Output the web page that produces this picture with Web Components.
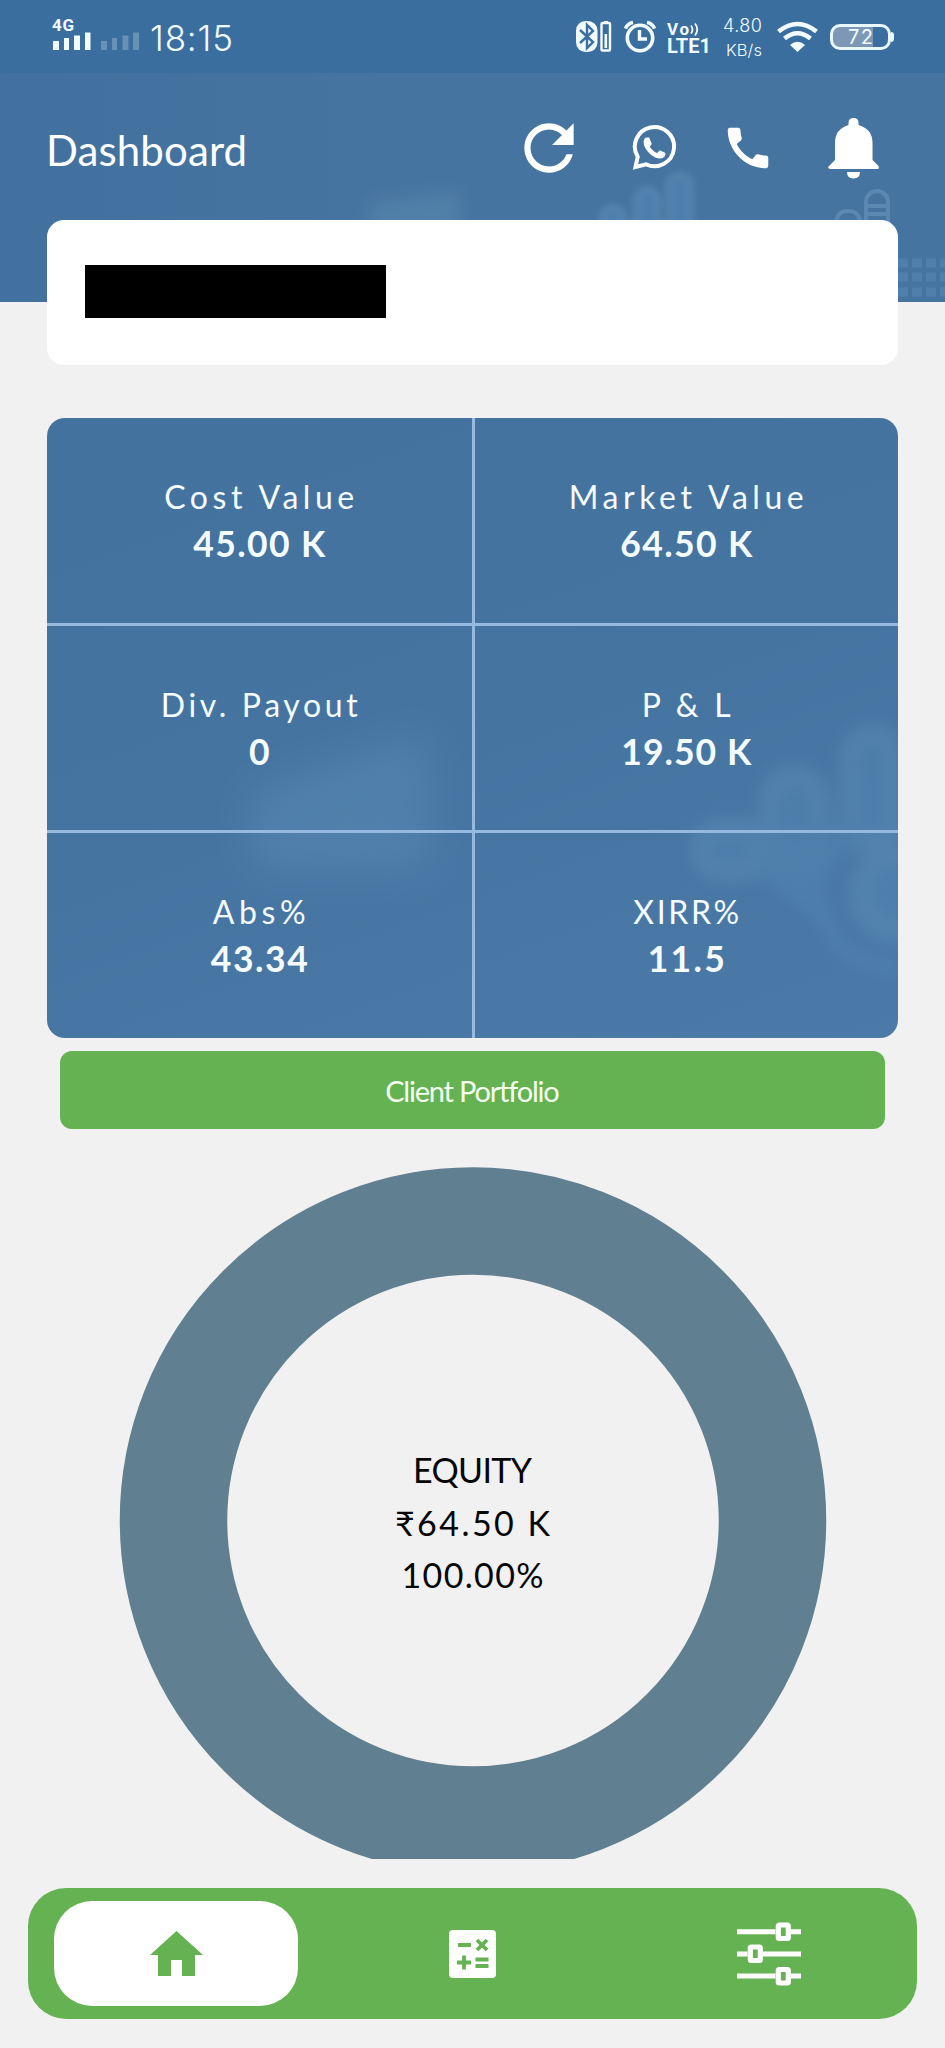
<!DOCTYPE html>
<html lang="en">
<head>
    <meta charset="UTF-8">
    <meta name="viewport" content="width=device-width, initial-scale=1.0">
    <title>Dashboard</title>
    <style>
        body {
            margin: 0;
            background: #f1f1f1;
            font-family: Lato, "Noto Sans", sans-serif;
        }
    </style>
</head>
<body>
    <dashboard-app></dashboard-app>

    <template id="tpl-app">
        <style>
            :host {
                display: flex;
                flex-direction: column;
                width: 945px;
                height: 2048px;
                overflow: hidden;
            }
            client-card { margin: -82px 47px 0; }
            stat-grid { margin: 53px 47px 0; }
            green-button { margin: 13px 60px 0; }
            donut-chart { margin-top: 38px; }
            bottom-nav { margin: 29px 28px 0; }
        </style>
        <status-bar></status-bar>
        <app-header>Dashboard</app-header>
        <client-card></client-card>
        <stat-grid>
            <stat-cell label="Cost Value" lw="190" value="45.00 K" vw="132"></stat-cell>
            <stat-cell label="Market Value" lw="235" value="64.50 K" vw="132"></stat-cell>
            <stat-cell label="Div. Payout" lw="197" value="0" vw="20"></stat-cell>
            <stat-cell label="P &amp; L" lw="89" value="19.50 K" vw="130"></stat-cell>
            <stat-cell label="Abs%" lw="93" value="43.34" vw="97"></stat-cell>
            <stat-cell label="XIRR%" lw="106" value="11.5" vw="77"></stat-cell>
        </stat-grid>
        <green-button><fit-text width="174">Client Portfolio</fit-text></green-button>
        <donut-chart>
            <fit-text width="119">EQUITY</fit-text>
            <fit-text width="155">₹64.50 K</fit-text>
            <fit-text width="142">100.00%</fit-text>
        </donut-chart>
        <bottom-nav></bottom-nav>
    </template>

    <template id="tpl-status">
        <style>
            :host {
                display: flex;
                align-items: flex-start;
                box-sizing: border-box;
                height: 73px;
                padding: 18px 51px 0 52px;
                background: #3a6e9f;
                color: #f2fbff;
                font-family: Roboto, sans-serif;
            }
            svg { display: block; flex: none; }
            .signal { width: 88px; }
            .gen { font: bold 17px/15px Roboto, sans-serif; height: 14px; }
            .clock { font: 300 35px/40px Inter, sans-serif; margin: 0 auto 0 10px; }
            .volte { width: 45px; margin: 3px 0 0 11px; font-weight: bold; }
            .vo { display: flex; font-size: 17px; line-height: 16px; height: 16px; }
            .vo svg { margin: 2px 0 0 1px; }
            .lte { font-size: 20px; line-height: 18px; }
            .speed { width: 42px; margin-left: 8px; text-align: right; font: 300 18px/24px Inter, sans-serif; margin-top: -4px; }
            .speed div + div { font-size: 16.5px; }
            .battery {
                display: flex;
                align-items: center;
                margin: 6px 0 0 12px;
            }
            .cell {
                box-sizing: border-box;
                width: 61px;
                height: 26px;
                border: 3px solid #e9f8ff;
                border-radius: 10px;
                text-align: center;
                font: 400 20px/20px Inter, sans-serif;
                background: linear-gradient(90deg, #7d98b4 72%, transparent 72%);
            }
            .cap { width: 3px; height: 10px; border-radius: 0 3px 3px 0; background: #e9f8ff; }
        </style>
        <div class="signal">
            <div class="gen"><fit-text width="22">4G</fit-text></div>
            <svg width="88" height="18" viewBox="0 0 88 18" fill="#f2fbff">
                <path d="M1 9h6v9H1zM12 6h5v12h-5zM22 3.500h6V18h-6zM33 .500h5.500V18H33z"/>
                <path opacity=".25" d="M49 9h6v9h-6zM60 6h5v12h-5zM70.500 3.500h6V18h-6zM81 .500h6V18h-6z"/>
            </svg>
        </div>
        <div class="clock"><fit-text width="83">18:15</fit-text></div>
        <svg width="36" height="35" viewBox="0 0 36 35" fill="none">
            <rect y="3" width="21.500" height="31" rx="9.500" fill="#f2fbff"/>
            <path d="M4 12l13 12-6 6V7l6 6L4 25" stroke="#3a6e9f" stroke-width="2.400"/>
            <rect x="25.500" y="5" width="8.500" height="27.500" rx="1" stroke="#f2fbff" stroke-width="2.400"/>
            <path d="M28 3h4v2h-4zM28.500 16h2.600v14h-2.600z" fill="#f2fbff"/>
        </svg>
        <svg width="32" height="35" viewBox="0 0 32 35" fill="none" stroke="#f2fbff" style="margin-left:12px">
            <circle cx="16" cy="20" r="12.700" stroke-width="3.600"/>
            <path d="M15.500 12v9h7.500" stroke-width="3.400"/>
            <path d="M1.500 10.500q2-5 7.500-6M30.500 10.500q-2-5-7.500-6" stroke-width="3.600"/>
        </svg>
        <div class="volte">
            <div class="vo"><fit-text width="22">Vo</fit-text>
                <svg width="9" height="13" viewBox="0 0 9 13" fill="none" stroke="#f2fbff" stroke-width="1.800"><path d="M1 2.500q3 4 0 8M5 .500q4.500 6 0 12"/></svg>
            </div>
            <div class="lte"><fit-text width="44">LTE1</fit-text></div>
        </div>
        <div class="speed"><div><fit-text width="39">4.80</fit-text></div><div><fit-text width="36">KB/s</fit-text></div></div>
        <svg width="41" height="35" viewBox="0 0 41 35" fill="none" stroke="#f2fbff" stroke-width="4.600" style="margin-left:15px">
            <path d="M1.500 13.500Q20.500-1.500 39.500 13.500M7.500 20.500q13-10.500 26 0"/>
            <path d="M13 27q7.500-6.500 15 0l-7.500 7z" fill="#f2fbff" stroke="none"/>
        </svg>
        <div class="battery"><div class="cell"><fit-text width="25">72</fit-text></div><div class="cap"></div></div>
    </template>

    <template id="tpl-header">
        <style>
            :host {
                display: block;
                flex: none;
                position: relative;
                height: 229px;
                background: linear-gradient(90deg, #42719f, #4674a0 40%, #4674a0);
                color: #fff;
            }
            .art { position: absolute; inset: 0; }
            .bar {
                position: relative;
                display: flex;
                align-items: flex-start;
                padding: 38px 66px 0 46px;
            }
            .title {
                margin: 11px auto 0 0;
                font-size: 42px;
                line-height: 56px;
            }
            svg { display: block; flex: none; }
        </style>
        <svg class="art" width="945" height="229" viewBox="0 73 945 229">
            <defs>
                <filter id="soft"><feGaussianBlur stdDeviation="3"/></filter>
                <filter id="haze" x="-30%" y="-30%" width="160%" height="160%"><feGaussianBlur stdDeviation="9"/></filter>
            </defs>
            <path filter="url(#haze)" d="M370 202l90-10v50h-90z" fill="#6b9dbd" opacity=".3"/>
            <g filter="url(#soft)" fill="#639aca" stroke="#79a8d0" stroke-width="6" opacity=".3">
                <rect x="668" y="175" width="23" height="70" rx="11"/>
                <rect x="636" y="189" width="22" height="60" rx="11"/>
                <rect x="602" y="207" width="22" height="40" rx="11"/>
            </g>
            <g fill="none" stroke="#7aa6c8" stroke-width="4" opacity=".4">
                <rect x="866" y="191" width="22" height="50" rx="11"/>
                <path d="M837 226q-2-15 11-15t12 15M866 206h22M866 214h22"/>
            </g>
            <g stroke="#73a3ce" stroke-width="9" stroke-dasharray="10 4" opacity=".25">
                <path d="M898 263h47M898 277h47M898 292h47"/>
            </g>
        </svg>
        <div class="bar">
            <div class="title"><fit-text width="201"><slot></slot></fit-text></div>
            <svg width="74" height="74" viewBox="0 0 24 24" fill="#fff"><path d="M17.650 6.350C16.200 4.900 14.210 4 12 4c-4.420 0-7.990 3.580-7.990 8s3.570 8 7.990 8c3.730 0 6.840-2.550 7.730-6h-2.080c-.82 2.330-3.040 4-5.650 4-3.310 0-6-2.690-6-6s2.690-6 6-6c1.660 0 3.140.69 4.220 1.780L13 11h7V4l-2.350 2.350z"/></svg>
            <svg width="46" height="46" viewBox="0 0 46 46" style="margin:13px 0 0 46px">
                <path d="M3.500 43l2.200-10.200A19.600 19.600 0 1 1 14 40.300z" fill="none" stroke="#fff" stroke-width="4"/>
                <path d="M14 13.500l3.200 0 2.600 6.500-2 2.700q3.300 5 7.500 6.300l2.500-2.700 5.200 2.400q1 .8.200 2.600-1.700 3.500-6.200 3.200-6.500-1-11.700-7.500-5-6.500-3.300-11.200.8-2 2-2.300z" fill="#fff"/>
            </svg>
            <svg width="54" height="54" viewBox="0 0 24 24" fill="#fff" style="margin:10px 0 0 43px"><path d="M20.010 15.380c-1.230 0-2.420-.2-3.530-.56-.35-.12-.74-.03-1.010.24l-1.570 1.970c-2.830-1.350-5.480-3.900-6.890-6.830l1.950-1.660c.27-.28.35-.67.24-1.020-.37-1.110-.56-2.300-.56-3.530 0-.54-.45-.99-.99-.99H4.190C3.650 3 3 3.240 3 3.990 3 13.280 10.730 21 20.010 21c.71 0 .99-.63.99-1.180v-3.450c0-.54-.45-.99-.99-.99z"/></svg>
            <svg width="51" height="61" viewBox="0 0 51 61" fill="#fff" style="margin:7px 0 0 53px">
                <path d="M20.500 5q0-5 5-5t5 5v2q14 4 14 18v17l6 6q1 3-1 3H2q-3-1-1-3l6-6V25Q7 11 20.500 7zM19 54h13q0 6.500-6.500 6.500T19 54z"/>
            </svg>
        </div>
    </template>

    <template id="tpl-card">
        <style>
            :host {
                display: block;
                flex: none;
                position: relative;
                box-sizing: border-box;
                height: 145px;
                padding: 45px 38px;
                border-radius: 17px;
                background: #fff;
            }
            .hidden-name { width: 301px; height: 53px; background: #000; }
        </style>
        <div class="hidden-name"></div>
    </template>

    <template id="tpl-grid">
        <style>
            :host {
                display: block;
                flex: none;
                position: relative;
                height: 620px;
                overflow: hidden;
                border-radius: 18px;
                background: linear-gradient(160deg, #43729f, #4674a1 50%, #4b7aa8);
                color: #f4fcff;
            }
            svg { position: absolute; inset: 0; }
            .cells {
                position: relative;
                display: grid;
                grid-template-columns: 427.500px 423.500px;
                grid-template-rows: 207.500px 207.500px 205px;
            }
            ::slotted(*) { border: 0 solid #94badf; }
            ::slotted(:nth-child(odd)) { border-right-width: 3px; }
            ::slotted(:nth-child(-n+4)) { border-bottom-width: 3px; }
        </style>
        <svg width="851" height="620" viewBox="47 418 851 620">
            <defs>
                <filter id="soft"><feGaussianBlur stdDeviation="8"/></filter>
                <filter id="haze" x="-30%" y="-30%" width="160%" height="160%"><feGaussianBlur stdDeviation="22"/></filter>
            </defs>
            <path filter="url(#haze)" d="M250 790l180-60v140H250z" fill="#6ba0c4" opacity=".27"/>
            <g filter="url(#soft)" fill="#5f96bd" fill-opacity=".75" stroke="#6da2c4" stroke-width="20" opacity=".27">
                <rect x="850" y="734" width="44" height="110" rx="22"/>
                <rect x="769" y="775" width="50" height="90" rx="25"/>
                <rect x="700" y="828" width="60" height="44" rx="22"/>
                <path d="M760 830l80-10 30 0-45 60 5 50-70-50z" stroke="none"/>
                <circle cx="898" cy="893" r="38" stroke-width="22"/>
                <path d="M823 910q10 55 75 57" fill="none" stroke-width="12" opacity=".6"/>
            </g>
        </svg>
        <div class="cells"><slot></slot></div>
    </template>

    <template id="tpl-donut">
        <style>
            :host {
                display: grid;
                flex: none;
                height: 692px;
                overflow: hidden;
                justify-items: center;
                color: #060606;
            }
            svg, .legend { grid-area: 1 / 1; }
            .legend {
                display: flex;
                flex-direction: column;
                align-items: center;
                padding-top: 277px;
                font-size: 34px;
                line-height: 52.500px;
            }
        </style>
        <svg width="708" height="708" viewBox="0 0 708 708">
            <circle cx="354" cy="353.500" r="299.500" fill="none" stroke="#607f90" stroke-width="107.500"/>
        </svg>
        <div class="legend"><slot></slot></div>
    </template>

    <template id="tpl-nav">
        <style>
            :host {
                display: grid;
                grid-template-columns: 244px 1fr 244px;
                flex: none;
                box-sizing: border-box;
                height: 131px;
                padding: 13px 26px;
                border-radius: 38px;
                background: #65b252;
            }
            .tab {
                display: flex;
                align-items: center;
                justify-content: center;
                border-radius: 38px;
            }
            .active { background: #fff; }
            svg { display: block; }
        </style>
        <div class="tab active">
            <svg width="53" height="45" viewBox="0 0 53 45"><path d="M26.500 0L53 24h-8v21H32V29H21v16H8V24H0z" fill="#65b252"/></svg>
        </div>
        <div class="tab">
            <svg width="47" height="48" viewBox="0 0 47 48" fill="none" stroke="#65b252" stroke-width="3.800">
                <rect width="47" height="48" rx="4" fill="#fff" stroke="none"/>
                <path d="M9 15h13M28 10l10 10M38 10L28 20M15 25.500v14M8 32.500h14M26.500 29.500h13M26.500 36h13"/>
            </svg>
        </div>
        <div class="tab">
            <svg width="64" height="64" viewBox="0 0 64 64" fill="none" stroke="#fff">
                <path d="M0 9.800h38.500M54 9.800h10M0 32h10.500M26 32h38M0 54h38.500M54 54h10" stroke-width="5"/>
                <g stroke-width="5.200">
                    <rect x="41.300" y="3" width="10" height="13.500" rx="1"/>
                    <rect x="13.300" y="25" width="10" height="13.500" rx="1"/>
                    <rect x="41.300" y="47.500" width="10" height="13.500" rx="1"/>
                </g>
            </svg>
        </div>
    </template>

    <script>
        // Elements whose shadow root is just a copy of their template
        const fromTemplate = (id) => class extends HTMLElement {
            constructor() {
                super();
                const shadow = this.attachShadow({ mode: "open" });
                shadow.appendChild(document.getElementById(id).content.cloneNode(true));
            }
        };

        // Spreads its letters so that the text spans the given width
        class FitText extends HTMLElement {
            constructor() {
                super();
                this.attachShadow({ mode: "open" }).innerHTML = `
                    <style>
                        :host { display: inline-block; white-space: nowrap; }
                    </style>
                    <slot></slot>
                `;
            }

            connectedCallback() {
                const slot = this.shadowRoot.querySelector("slot");
                const text = slot.assignedNodes({ flatten: true }).map(n => n.textContent).join("").trim();
                if (text.length < 2) return;
                const extra = Number(this.getAttribute("width")) - this.getBoundingClientRect().width;
                const spacing = extra / (text.length - 1);
                this.style.letterSpacing = `${spacing}px`;
                this.style.marginRight = `${-spacing}px`;
            }
        }

        class StatCell extends HTMLElement {
            constructor() {
                super();
                this.attachShadow({ mode: "open" });
            }

            connectedCallback() {
                this.shadowRoot.innerHTML = `
                    <style>
                        :host {
                            display: flex;
                            flex-direction: column;
                            align-items: center;
                            justify-content: flex-start;
                            box-sizing: border-box;
                            padding-top: 55px;
                            line-height: 47px;
                        }
                        .label { font-size: 32px; }
                        .value { font-size: 35.5px; font-weight: bold; }
                    </style>
                    <fit-text class="label" width="${this.getAttribute("lw")}">${this.getAttribute("label")}</fit-text>
                    <fit-text class="value" width="${this.getAttribute("vw")}">${this.getAttribute("value")}</fit-text>
                `;
            }
        }

        class GreenButton extends HTMLElement {
            constructor() {
                super();
                this.attachShadow({ mode: "open" }).innerHTML = `
                    <style>
                        :host {
                            display: flex;
                            flex: none;
                            justify-content: center;
                            height: 78px;
                            border-radius: 12px;
                            background: #65b252;
                            color: #f4fff0;
                            font-size: 29px;
                            line-height: 79px;
                        }
                    </style>
                    <slot></slot>
                `;
            }
        }

        customElements.define("status-bar", fromTemplate("tpl-status"));
        customElements.define("app-header", fromTemplate("tpl-header"));
        customElements.define("client-card", fromTemplate("tpl-card"));
        customElements.define("stat-grid", fromTemplate("tpl-grid"));
        customElements.define("stat-cell", StatCell);
        customElements.define("green-button", GreenButton);
        customElements.define("donut-chart", fromTemplate("tpl-donut"));
        customElements.define("bottom-nav", fromTemplate("tpl-nav"));
        customElements.define("dashboard-app", fromTemplate("tpl-app"));
        // Last, so that every text is already in place when it is measured
        customElements.define("fit-text", FitText);
    </script>
</body>
</html>
